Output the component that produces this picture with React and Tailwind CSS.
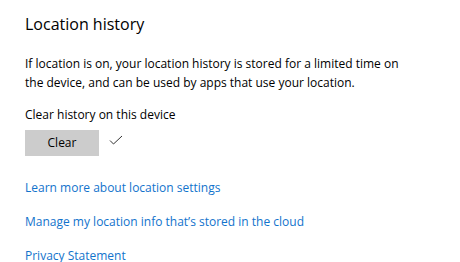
export default function App() {
  return (
    <div
      className="w-[460px] h-[262px] overflow-hidden bg-white pl-[25px] pt-[12px] text-[#000]"
      style={{ fontFamily: '"Open Sans", "Noto Sans", sans-serif' }}
    >
      <h2 className="text-[16px] leading-[24px] font-normal text-black">Location history</h2>

      <p className="mt-[18px] text-[12px] leading-[19px] w-[382px]">
        If location is on, your location history is stored for a limited time on
        the device, and can be used by apps that use your location.
      </p>

      <div className="mt-[14px] text-[12px] leading-[18px]">Clear history on this device</div>

      <div className="mt-[6px] flex items-center gap-[10px]">
        <button className="w-[74px] h-[26px] bg-[#cccccc] text-[12px] text-black">Clear</button>
        <svg width="14" height="10" viewBox="0 0 14 10" className="-mt-[6px]">
          <path d="M1 5.5 L4.5 9 L13 1" fill="none" stroke="#333" strokeWidth="1" />
        </svg>
      </div>

      <div className="mt-[22px] flex flex-col items-start gap-[15px] text-[12px] leading-[19px] text-[#1273cc]">
        <a href="#">Learn more about location settings</a>
        <a href="#">Manage my location info that’s stored in the cloud</a>
        <a href="#">Privacy Statement</a>
      </div>
    </div>
  );
}
